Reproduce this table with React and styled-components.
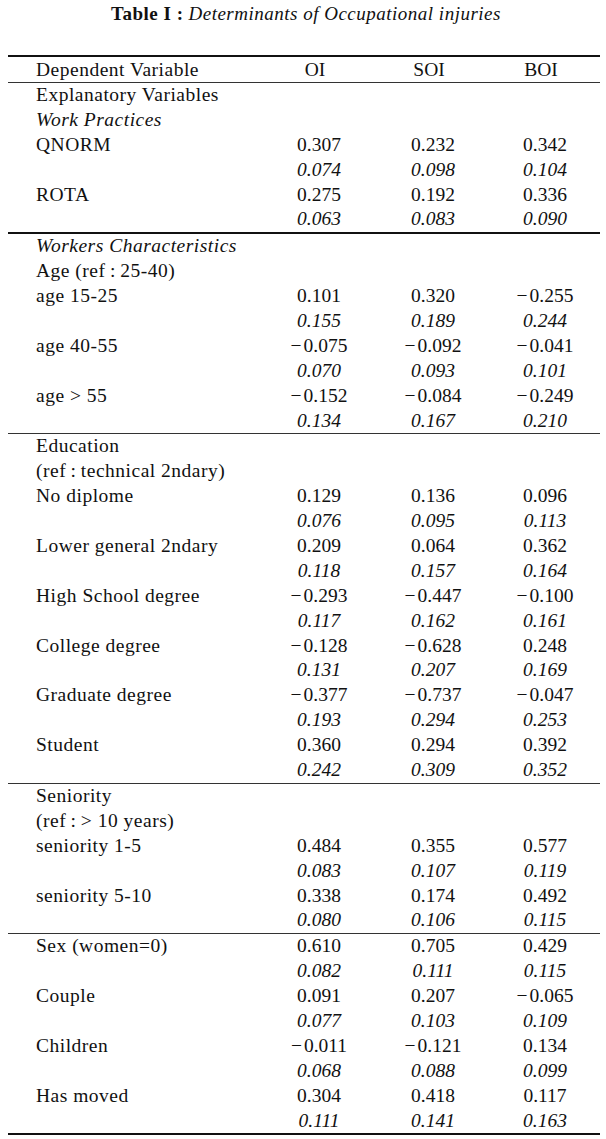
import React from "react";
import styled, { createGlobalStyle } from "styled-components";

const GlobalStyle = createGlobalStyle`
  html, body {
    margin: 0;
    padding: 0;
    background: #ffffff;
  }
  body {
    font-family: "Liberation Serif", "Times New Roman", serif;
    color: #111;
  }
`;

const Page = styled.div`
  width: 606px;
  padding: 3px 0 0 0;
`;

const Title = styled.div`
  text-align: center;
  font-size: 19px;
  line-height: 22px;
  letter-spacing: 0.5px;
  padding-left: 6px;
  margin-bottom: 30px;
  white-space: nowrap;
`;

const TitleLabel = styled.span`
  font-weight: bold;
  margin-right: 5px;
`;

const TitleText = styled.span`
  font-style: italic;
`;

const Table = styled.div`
  margin: 0 6px 0 8px;
  display: flex;
  flex-direction: column;
`;

const Rule = styled.div`
  height: ${props => (props.thick ? "2px" : "1px")};
  background: ${props => (props.thick ? "#111" : "#333")};
`;

const Row = styled.div`
  display: grid;
  grid-template-columns: 254px 114px 114px 110px;
  height: ${props => (props.header ? "25px" : "24.9px")};
  line-height: ${props => (props.header ? "25px" : "24.9px")};
  font-size: 19.5px;
  white-space: nowrap;
`;

const Label = styled.div`
  padding-left: 28px;
  letter-spacing: 0.5px;
  font-style: ${props => (props.italic ? "italic" : "normal")};
`;

const Cell = styled.div`
  text-align: center;
  padding-right: ${props => (props.head ? "8px" : "0")};
  font-style: ${props => (props.italic ? "italic" : "normal")};
`;

const Minus = styled.span`
  margin-right: 2px;
`;

const sections = [
  {
    thick: true,
    rows: [
      { label: "Explanatory Variables" },
      { label: "Work Practices", italic: true },
      { label: "QNORM", v: ["0.307", "0.232", "0.342"] },
      { se: ["0.074", "0.098", "0.104"] },
      { label: "ROTA", v: ["0.275", "0.192", "0.336"] },
      { se: ["0.063", "0.083", "0.090"] }
    ]
  },
  {
    rows: [
      { label: "Workers Characteristics", italic: true },
      { label: "Age (ref\u2009:\u200925-40)" },
      { label: "age 15-25", v: ["0.101", "0.320", "-0.255"] },
      { se: ["0.155", "0.189", "0.244"] },
      { label: "age 40-55", v: ["-0.075", "-0.092", "-0.041"] },
      { se: ["0.070", "0.093", "0.101"] },
      { label: "age > 55", v: ["-0.152", "-0.084", "-0.249"] },
      { se: ["0.134", "0.167", "0.210"] }
    ]
  },
  {
    rows: [
      { label: "Education" },
      { label: "(ref\u2009:\u2009technical 2ndary)" },
      { label: "No diplome", v: ["0.129", "0.136", "0.096"] },
      { se: ["0.076", "0.095", "0.113"] },
      { label: "Lower general 2ndary", v: ["0.209", "0.064", "0.362"] },
      { se: ["0.118", "0.157", "0.164"] },
      { label: "High School degree", v: ["-0.293", "-0.447", "-0.100"] },
      { se: ["0.117", "0.162", "0.161"] },
      { label: "College degree", v: ["-0.128", "-0.628", "0.248"] },
      { se: ["0.131", "0.207", "0.169"] },
      { label: "Graduate degree", v: ["-0.377", "-0.737", "-0.047"] },
      { se: ["0.193", "0.294", "0.253"] },
      { label: "Student", v: ["0.360", "0.294", "0.392"] },
      { se: ["0.242", "0.309", "0.352"] }
    ]
  },
  {
    rows: [
      { label: "Seniority" },
      { label: "(ref\u2009:\u2009> 10 years)" },
      { label: "seniority 1-5", v: ["0.484", "0.355", "0.577"] },
      { se: ["0.083", "0.107", "0.119"] },
      { label: "seniority 5-10", v: ["0.338", "0.174", "0.492"] },
      { se: ["0.080", "0.106", "0.115"] }
    ]
  },
  {
    thick: true,
    rows: [
      { label: "Sex (women=0)", v: ["0.610", "0.705", "0.429"] },
      { se: ["0.082", "0.111", "0.115"] },
      { label: "Couple", v: ["0.091", "0.207", "-0.065"] },
      { se: ["0.077", "0.103", "0.109"] },
      { label: "Children", v: ["-0.011", "-0.121", "0.134"] },
      { se: ["0.068", "0.088", "0.099"] },
      { label: "Has moved", v: ["0.304", "0.418", "0.117"] },
      { se: ["0.111", "0.141", "0.163"] }
    ]
  }
];

// negative values get a real minus sign, a little wider like TeX's
const formatValue = value => {
  if (!value) return "";
  if (value[0] === "-") {
    return (
      <>
        <Minus>{"\u2212"}</Minus>
        {value.slice(1)}
      </>
    );
  }
  return value;
};

const TableRow = ({ row }) => {
  const values = row.v || row.se || [];
  return (
    <Row>
      <Label italic={row.italic}>{row.label || ""}</Label>
      {[0, 1, 2].map(i => (
        <Cell key={i} italic={!!row.se}>
          {formatValue(values[i])}
        </Cell>
      ))}
    </Row>
  );
};

export default function App() {
  return (
    <Page>
      <GlobalStyle />
      <Title>
        <TitleLabel>Table I :</TitleLabel>
        <TitleText>Determinants of Occupational injuries</TitleText>
      </Title>
      <Table>
        <Rule thick />
        <Row header>
          <Label>Dependent Variable</Label>
          <Cell head>OI</Cell>
          <Cell head>SOI</Cell>
          <Cell head>BOI</Cell>
        </Row>
        <Rule />
        {sections.map((section, si) => (
          <React.Fragment key={si}>
            {section.rows.map((row, ri) => (
              <TableRow key={ri} row={row} />
            ))}
            <Rule thick={section.thick} />
          </React.Fragment>
        ))}
      </Table>
    </Page>
  );
}
